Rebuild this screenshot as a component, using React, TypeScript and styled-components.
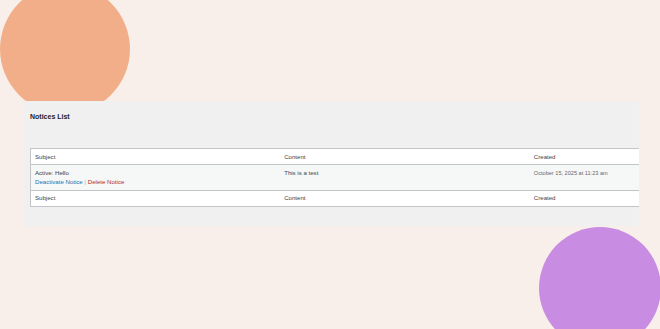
import React from 'react';
import styled, { createGlobalStyle } from 'styled-components';

const GlobalStyle = createGlobalStyle`
  html, body {
    margin: 0;
    padding: 0;
    background: #f8efea;
    font-family: "Liberation Sans", Arial, sans-serif;
    overflow: hidden;
  }
`;

const Page = styled.div`
  position: relative;
  width: 660px;
  height: 329px;
  overflow: hidden;
  padding: 101px 0 0 23px;
  box-sizing: border-box;
`;

const Blob = styled.div<{ $color: string; $size: number; $x: number; $y: number }>`
  position: absolute;
  left: ${({ $x }) => $x}px;
  top: ${({ $y }) => $y}px;
  width: ${({ $size }) => $size}px;
  height: ${({ $size }) => $size}px;
  border-radius: 50%;
  background: ${({ $color }) => $color};
  z-index: 0;
`;

const Panel = styled.section`
  position: relative;
  z-index: 1;
  width: 616px;
  height: 125px;
  background: #f0f0f1;
  padding: 11px 0 0 7px;
  box-sizing: border-box;
  overflow: hidden;
`;

const Title = styled.h2`
  margin: 0 0 26px;
  font-size: 7px;
  line-height: 10px;
  font-weight: 700;
  color: #1d2327;
`;

const Table = styled.table`
  width: 750px;
  border-collapse: collapse;
  background: #fff;
  border: 1px solid #c3c4c7;
  table-layout: fixed;
  font-size: 6.1px;
  color: #3c434a;
`;

const HeadCell = styled.th`
  text-align: left;
  font-weight: 400;
  height: 15px;
  padding: 0 4px;
  vertical-align: middle;
  line-height: 8px;
`;

const HeadRow = styled.tr<{ $bottom?: boolean }>`
  border-${({ $bottom }) => ($bottom ? 'top' : 'bottom')}: 1px solid #c3c4c7;
`;

const BodyRow = styled.tr`
  background: #f6f7f7;
`;

const Cell = styled.td<{ $muted?: boolean }>`
  vertical-align: top;
  padding: 4px 4px 0;
  height: 20.5px;
  line-height: 8.5px;
  color: ${({ $muted }) => ($muted ? '#646970' : '#3c434a')};
  font-size: ${({ $muted }) => ($muted ? '5.6px' : '6.1px')};
`;

const Actions = styled.div`
  color: #a7aaad;
`;

const Action = styled.a<{ $danger?: boolean }>`
  color: ${({ $danger }) => ($danger ? '#b32d2e' : '#2271b1')};
  text-decoration: none;
`;

const columns = ['Subject', 'Content', 'Created'];

export default function App() {
  return (
    <>
      <GlobalStyle />
      <Page>
        <Blob $color="#f2ae88" $size={130} $x={0} $y={-16} />
        <Blob $color="#c98ce3" $size={122} $x={539} $y={227} />
        <Panel>
          <Title>Notices List</Title>
          <Table>
            <thead>
              <HeadRow>
                {columns.map((c) => (
                  <HeadCell key={c}>{c}</HeadCell>
                ))}
              </HeadRow>
            </thead>
            <tbody>
              <BodyRow>
                <Cell>
                  Active: Hello
                  <Actions>
                    <Action href="#">Deactivate Notice</Action> | <Action href="#" $danger>Delete Notice</Action>
                  </Actions>
                </Cell>
                <Cell>This is a test</Cell>
                <Cell $muted>October 15, 2025 at 11:23 am</Cell>
              </BodyRow>
            </tbody>
            <tfoot>
              <HeadRow $bottom>
                {columns.map((c) => (
                  <HeadCell key={c}>{c}</HeadCell>
                ))}
              </HeadRow>
            </tfoot>
          </Table>
        </Panel>
      </Page>
    </>
  );
}
